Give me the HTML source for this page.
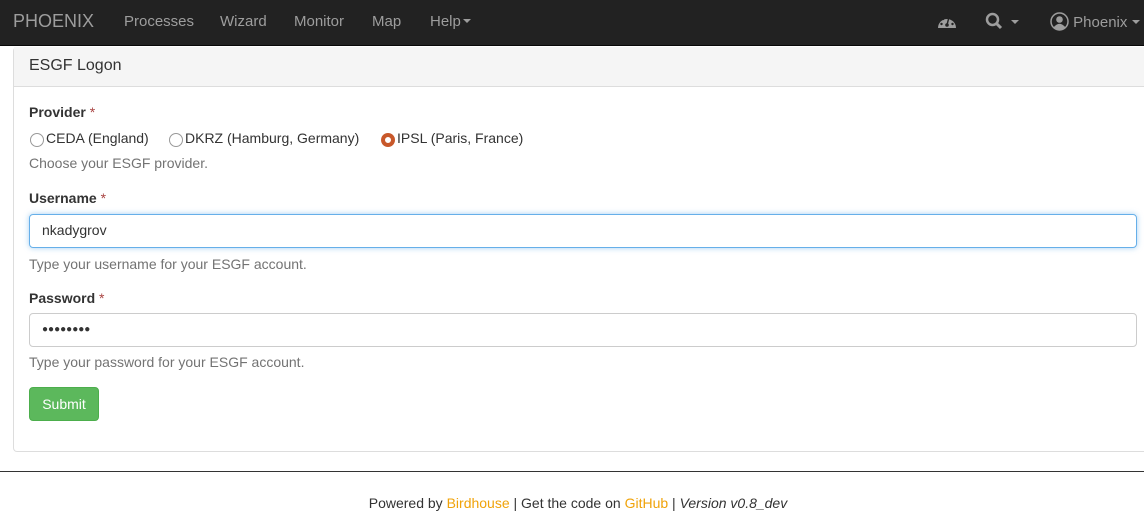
<!DOCTYPE html>
<html><head><meta charset="utf-8"><style>
*{box-sizing:border-box}
body{margin:0;width:1144px;height:517px;overflow:hidden;font-family:"Liberation Sans",sans-serif;font-size:14px;color:#333;background:#fff}
.nav{height:46px;background:#222;border-bottom:1px solid #080808;position:relative;color:#9d9d9d}
.nav>span{position:absolute;top:13px;font-size:15px;white-space:nowrap}
.brand{font-size:18px!important;top:11px!important;left:13px}
.car{display:inline-block;width:0;height:0;border-left:4px solid transparent;border-right:4px solid transparent;border-top:4px solid #9d9d9d;vertical-align:3px;margin-left:2px}
.panel{position:absolute;left:13px;top:47px;width:1140px;height:405px;border:1px solid #ddd;border-radius:4px;border-top:none}
.ph{height:40px;background:#f5f5f5;border-bottom:1px solid #ddd;padding:10px 15px;font-size:16px}
.lbl{position:absolute;left:15px;font-weight:bold}
.lbl i{color:#a94442;font-style:normal;font-weight:normal}
.help{position:absolute;left:15px;color:#737373}
.inp{position:absolute;left:15px;width:1108px;height:34px;border:1px solid #ccc;border-radius:4px;padding:7px 12px}
.radio{position:absolute;top:83px}
.rc{display:inline-block;width:14px;height:14px;border:1px solid #999;border-radius:50%;vertical-align:-4px;margin-right:2px;background:#fff}
</style></head><body>
<div class="nav">
<span class="brand">PHOENIX</span>
<span style="left:124px">Processes</span><span style="left:220px">Wizard</span><span style="left:294px">Monitor</span><span style="left:372px">Map</span><span style="left:430px">Help<i class="car"></i></span>
<span style="left:937px;top:12px"><svg width="20" height="18" viewBox="0 0 20 18"><path d="M1 16A9 9 0 1 1 19 16Z" fill="#9d9d9d"/><circle cx="10" cy="13" r="1.8" fill="#222"/><path d="M10 13L12 5" stroke="#222" stroke-width="1.5"/><circle cx="4.5" cy="12" r="1.2" fill="#222"/><circle cx="6" cy="7" r="1.2" fill="#222"/><circle cx="15.5" cy="12" r="1.2" fill="#222"/><circle cx="14.5" cy="7" r="1.2" fill="#222"/></svg></span>
<span style="left:985px;top:12px"><svg width="18" height="18" style="vertical-align:-3px"><circle cx="7.5" cy="7.5" r="5.5" stroke="#9d9d9d" stroke-width="2.5" fill="none"/><path d="M11.5 11.5L16 16" stroke="#9d9d9d" stroke-width="3"/></svg> <i class="car" style="margin-left:4px"></i></span>
<span style="left:1050px;top:12px"><svg width="19" height="19" style="vertical-align:-4px"><circle cx="9.5" cy="9.5" r="8.5" stroke="#9d9d9d" stroke-width="1.5" fill="none"/><circle cx="9.5" cy="7.5" r="3.3" fill="#9d9d9d"/><path d="M3.5 15.5Q9.5 8 15.5 15.5Q9.5 20 3.5 15.5Z" fill="#9d9d9d"/></svg> Phoenix<i class="car" style="margin-left:5px"></i></span>
</div>
<div class="panel">
<div class="ph">ESGF Logon</div>
<div class="lbl" style="top:57px">Provider <i>*</i></div>
<div class="radio" style="left:16px"><span class="rc"></span>CEDA (England)</div>
<div class="radio" style="left:155px"><span class="rc"></span>DKRZ (Hamburg, Germany)</div>
<div class="radio" style="left:367px"><span class="rc" style="background:#fff;border:4px solid #c8582a"></span>IPSL (Paris, France)</div>
<div class="help" style="top:108px">Choose your ESGF provider.</div>
<div class="lbl" style="top:143px">Username <i>*</i></div>
<div class="inp" style="top:167px;border-color:#66afe9;box-shadow:0 0 6px rgba(102,175,233,.6)">nkadygrov</div>
<div class="help" style="top:209px">Type your username for your ESGF account.</div>
<div class="lbl" style="top:243px">Password <i>*</i></div>
<div class="inp" style="top:266px;font-size:10px;padding-top:10px">&#9679;&#9679;&#9679;&#9679;&#9679;&#9679;&#9679;&#9679;</div>
<div class="help" style="top:307px">Type your password for your ESGF account.</div>
<div style="position:absolute;left:15px;top:340px;width:70px;height:34px;background:#5cb85c;border:1px solid #4cae4c;border-radius:4px;color:#fff;text-align:center;line-height:32px">Submit</div>
</div>
<div style="position:absolute;top:471px;left:0;width:1144px;border-top:1px solid #333"></div>
<div style="position:absolute;top:495px;left:0;width:1156px;text-align:center">Powered by <span style="color:#f0a30a">Birdhouse</span> | Get the code on <span style="color:#f0a30a">GitHub</span> | <i>Version v0.8_dev</i></div>
</body></html>
